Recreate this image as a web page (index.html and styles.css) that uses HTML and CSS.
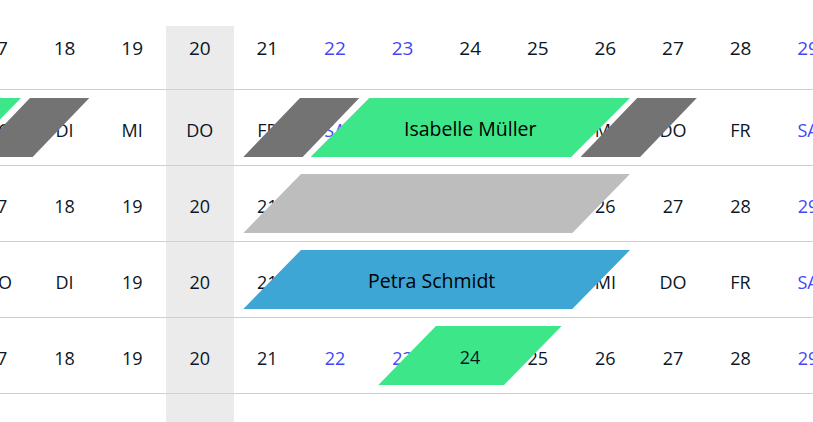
FILE: index.html
```html
<!DOCTYPE html>
<html lang="de">
<head>
<meta charset="utf-8">
<title>Kalender</title>
<link rel="stylesheet" href="styles.css">
</head>
<body>
<div class="calendar">
  <div class="row header">
    <div class="cells">
      <span>17</span><span>18</span><span>19</span><span>20</span><span>21</span><span class="we">22</span><span class="we">23</span><span>24</span><span>25</span><span>26</span><span>27</span><span>28</span><span class="we">29</span>
    </div>
  </div>

  <div class="row">
    <div class="cells">
      <span>MO</span><span>DI</span><span>MI</span><span>DO</span><span>FR</span><span class="we">SA</span><span></span><span></span><span></span><span>MI</span><span>DO</span><span>FR</span><span class="we">SA</span>
    </div>
    <div class="bar green" style="left:-300px;width:321px"></div>
    <div class="bar dark" style="left:-26.7px;width:116px"></div>
    <div class="bar dark" style="left:243.3px;width:116px"></div>
    <div class="bar green slant59" style="left:310.5px;width:319.5px"><span class="name">Isabelle Müller</span></div>
    <div class="bar dark" style="left:580.5px;width:116.3px"></div>
  </div>

  <div class="row">
    <div class="cells">
      <span>17</span><span>18</span><span>19</span><span>20</span><span>21</span><span></span><span></span><span></span><span></span><span>26</span><span>27</span><span>28</span><span class="we">29</span>
    </div>
    <div class="bar light" style="left:243.3px;width:386.7px"></div>
  </div>

  <div class="row">
    <div class="cells">
      <span>MO</span><span>DI</span><span>19</span><span>20</span><span>21</span><span></span><span></span><span></span><span></span><span>MI</span><span>DO</span><span>FR</span><span class="we">SA</span>
    </div>
    <div class="bar blue shifted" style="left:243.3px;width:386.7px"><span class="name">Petra Schmidt</span></div>
  </div>

  <div class="row last">
    <div class="cells">
      <span>17</span><span>18</span><span>19</span><span>20</span><span>21</span><span class="we">22</span><span class="we">23</span><span></span><span>25</span><span>26</span><span>27</span><span>28</span><span class="we">29</span>
    </div>
    <div class="bar green" style="left:378.3px;width:183.4px"><span class="day">24</span></div>
  </div>
</div>
</body>
</html>
```

FILE: styles.css
```css
html, body {
  margin: 0;
  padding: 0;
  background: #ffffff;
  overflow: hidden;
}

body {
  width: 813px;
  height: 422px;
  font-family: "Open Sans", "Lato", sans-serif;
  color: #0c1626;
}

.calendar {
  margin-top: 26px;
  min-height: 396px;
  background: linear-gradient(to right,
    transparent 0, transparent 166px,
    #ebebeb 166px, #ebebeb 234px,
    transparent 234px);
}

.row {
  position: relative;
  height: 75px;
  border-top: 1px solid #cfcfcf;
}

.row.last {
  border-bottom: 1px solid #cfcfcf;
}

.row.header {
  height: 63px;
  border-top: 0;
}

.cells {
  margin-left: -36.8px;
  display: grid;
  grid-template-columns: repeat(13, 67.6px);
  height: 100%;
  align-items: center;
  box-sizing: border-box;
  padding-top: 4px;
  font-size: 18px;
  font-weight: 500;
  line-height: 22px;
}

.header .cells {
  align-items: start;
  padding-top: 11px;
  font-size: 19px;
}

.cells span {
  text-align: center;
}

.we {
  color: #4646f7;
}

.bar {
  position: absolute;
  top: 8px;
  height: 59px;
  display: flex;
  align-items: center;
  justify-content: center;
  clip-path: polygon(57.7px 0, 100% 0, calc(100% - 57.7px) 100%, 0 100%);
  z-index: 1;
}

.bar.slant59 {
  clip-path: polygon(58.8px 0, 100% 0, calc(100% - 58.8px) 100%, 0 100%);
}

.bar.dark {
  background: #737373;
  clip-path: polygon(56.7px 0, 100% 0, calc(100% - 56.7px) 100%, 0 100%);
}

.bar.green {
  background: #3ee68a;
}

.bar.light {
  background: #bdbdbd;
}

.bar.blue {
  background: #3da6d5;
}

.bar.shifted {
  padding-right: 10px;
  box-sizing: border-box;
}

.name {
  font-size: 19.5px;
  font-weight: 500;
  color: #000000;
  padding-top: 2px;
}

.day {
  font-size: 18px;
  font-weight: 500;
  color: #0c1626;
  padding-top: 2px;
}
```
